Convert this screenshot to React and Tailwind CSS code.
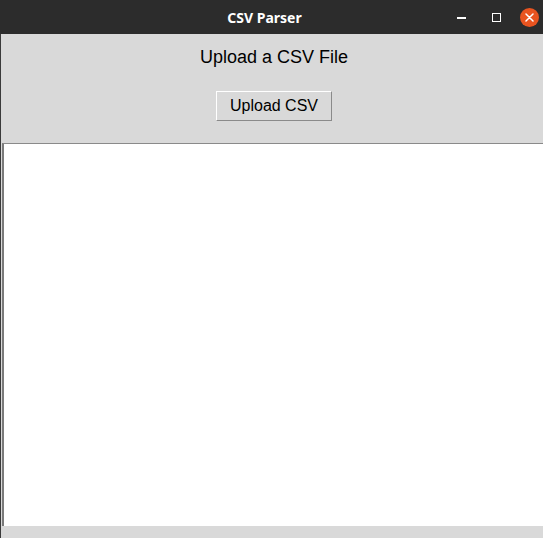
import React from 'react';

function TitleBar() {
  return (
    <div className="relative h-[34px] bg-[#2c2c2c] flex items-center justify-center pr-[14px]">
      <span className="text-white text-[14px] font-bold" style={{ fontFamily: '"Noto Sans", "DejaVu Sans", sans-serif' }}>
        CSV Parser
      </span>
      {/* window controls */}
      <div className="absolute right-0 top-0 h-[34px] flex items-center">
        <div className="w-[32px] flex justify-center">
          <div className="w-[9px] h-[1.5px] bg-white mt-[2px]" />
        </div>
        <div className="w-[38px] flex justify-center">
          <div className="w-[9px] h-[9px] border-[1.5px] border-white" />
        </div>
        <div className="w-[28px] flex justify-center">
          <div className="w-[19px] h-[19px] rounded-full bg-[#e95420] flex items-center justify-center">
            <svg width="9" height="9" viewBox="0 0 9 9">
              <path d="M1 1 L8 8 M8 1 L1 8" stroke="white" strokeWidth="1.5" strokeLinecap="round" />
            </svg>
          </div>
        </div>
      </div>
    </div>
  );
}

export default function App() {
  return (
    <div className="w-[543px] h-[538px] overflow-hidden bg-[#d9d9d9]" style={{ fontFamily: '"Liberation Sans", Arial, sans-serif' }}>
      <TitleBar />
      <div className="h-[504px] border-l border-[#3a3a3a] flex flex-col">
        <div className="flex flex-col items-center pt-[12px] pl-[4px]">
          <div className="text-[18px] leading-[22px] text-black">Upload a CSV File</div>
          <button className="mt-[23px] h-[30px] w-[116px] border border-t-white border-l-white border-r-[#8a8a8a] border-b-[#8a8a8a] bg-[#d9d9d9] text-[16px] text-black">
            Upload CSV
          </button>
        </div>
        <div className="mt-[22px] ml-[1px] h-[383px] bg-white border-t border-l-2 border-t-[#8a8a8a] border-l-[#7a7a7a]" />
      </div>
    </div>
  );
}
